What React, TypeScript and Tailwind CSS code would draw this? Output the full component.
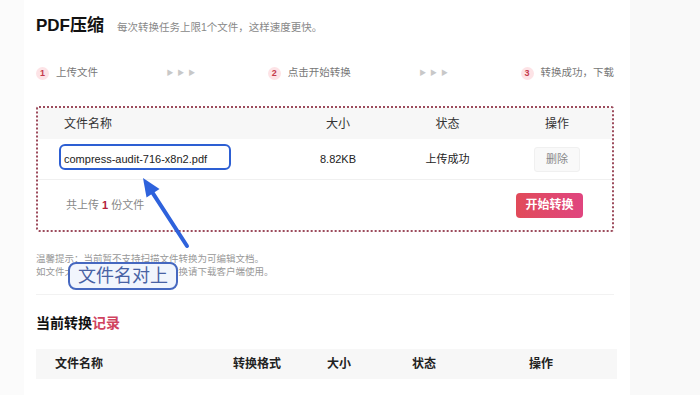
import React from "react";

const steps = [
    { n: "1", label: "上传文件" },
    { n: "2", label: "点击开始转换" },
    { n: "3", label: "转换成功，下载" },
];

const StepBadge = ({ n, label }: { n: string; label: string }) => (
    <div className="flex items-center gap-[7px]">
        <span className="w-[13px] h-[13px] rounded-full bg-[#fde3e6] text-[#c43a4c] text-[9px] font-bold flex items-center justify-center leading-none">
            {n}
        </span>
        <span className="text-[10.5px] text-[#777]">{label}</span>
    </div>
);

const Arrows = () => (
    <span className="text-[7px] text-[#c8c8c8] tracking-[4px]">▶▶▶</span>
);

function App() {
    return (
        <div className="relative w-[700px] h-[395px] overflow-hidden flex bg-[#fafafa] font-['Liberation_Sans','Noto_Sans_CJK_SC',sans-serif]">
            <div className="w-[24px] bg-[#fbfbfb]" />

            <main className="w-[606px] bg-white pl-[12px] pr-[16px]">
                {/* Heading */}
                <div className="flex items-baseline gap-[13px] pt-[14px]">
                    <h1 className="text-[17px] font-bold text-[#111] leading-[24px]">PDF压缩</h1>
                    <p className="text-[10.5px] text-[#888]">每次转换任务上限1个文件，这样速度更快。</p>
                </div>

                {/* Steps */}
                <div className="mt-[27px] h-[16px] flex items-center justify-between">
                    <StepBadge {...steps[0]} />
                    <Arrows />
                    <StepBadge {...steps[1]} />
                    <Arrows />
                    <StepBadge {...steps[2]} />
                </div>

                {/* Upload box */}
                <div className="mt-[25px] h-[126px] border-2 border-dotted border-[#9c4b5c] rounded-[3px] flex flex-col">
                    <div className="h-[31px] bg-[#f7f7f7] grid grid-cols-[245px_110px_109px_110px] items-center text-[12px] text-[#333]">
                        <span className="pl-[26px]">文件名称</span>
                        <span className="text-center">大小</span>
                        <span className="text-center">状态</span>
                        <span className="text-center">操作</span>
                    </div>
                    <div className="h-[41px] border-b border-[#f0f0f0] grid grid-cols-[245px_110px_109px_110px] items-center text-[11px] text-[#222]">
                        <span className="pl-[26px]">compress-audit-716-x8n2.pdf</span>
                        <span className="text-center">8.82KB</span>
                        <span className="text-center">上传成功</span>
                        <div className="flex justify-center">
                            <button className="w-[46px] h-[25px] bg-[#f9f9f9] border border-[#f0f0f0] rounded-[3px] text-[11px] text-[#888]">
                                删除
                            </button>
                        </div>
                    </div>
                    <div className="flex-1 flex items-center justify-between pl-[28px] pr-[29px]">
                        <span className="text-[11px] text-[#888]">
                            共上传 <b className="text-[#b3213a]">1</b> 份文件
                        </span>
                        <button className="w-[67px] h-[25px] rounded-[4px] bg-gradient-to-r from-[#e14a59] to-[#e0457f] text-white text-[12px] font-bold">
                            开始转换
                        </button>
                    </div>
                </div>

                {/* Tips */}
                <div className="mt-[20px] text-[9.5px] leading-[13px] text-[#999]">
                    <p>温馨提示：当前暂不支持扫描文件转换为可编辑文档。</p>
                    <p>如文件大于限定大小，或需批量转换请下载客户端使用。</p>
                </div>

                <div className="mt-[16px] h-px bg-[#f2f2f2]" />

                {/* History */}
                <h2 className="mt-[18px] text-[14px] font-bold leading-[20px] text-[#111]">
                    当前转换<span className="text-[#d0435f]">记录</span>
                </h2>
                <div className="mt-[16px] h-[30px] w-[581px] bg-[#f7f7f7] grid grid-cols-[197px_94px_85px_117px_1fr] items-center text-[12px] font-bold text-[#222]">
                    <span className="pl-[19px]">文件名称</span>
                    <span>转换格式</span>
                    <span>大小</span>
                    <span>状态</span>
                    <span>操作</span>
                </div>
            </main>

            <div className="flex-1 bg-[#f9f9f9]" />

            {/* Annotation overlays */}
            <div className="absolute left-[59px] top-[144px] w-[172px] h-[26px] border-2 border-[#2d5fd3] rounded-[6px]" />
            <svg className="absolute left-0 top-0" width="700" height="395" viewBox="0 0 700 395">
                <line x1="187" y1="246" x2="152.8" y2="193.1" stroke="#2e62dc" strokeWidth="4" strokeLinecap="round" />
                <polygon points="143,178 159.5,189 146.5,197.5" fill="#2e62dc" />
            </svg>
            <div className="absolute left-[68px] top-[262px] w-[110px] h-[28px] border-2 border-[#4668c0] rounded-[8px] bg-[#f1f5fd] flex items-center justify-center">
                <span className="text-[18px] leading-none text-[#4862a4]">文件名对上</span>
            </div>
        </div>
    );
}

export default App;
